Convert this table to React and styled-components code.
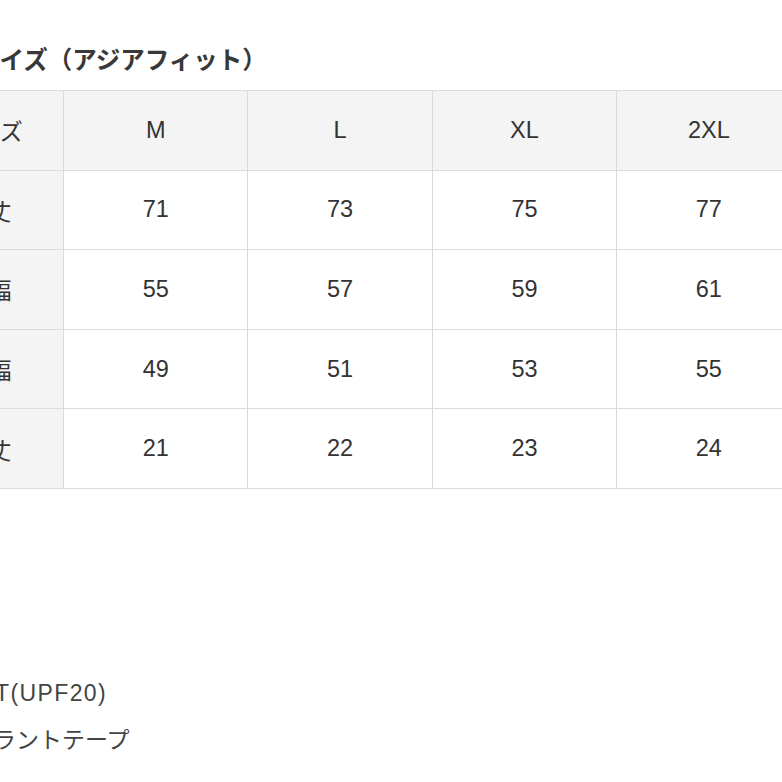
import React from "react";
import styled, { createGlobalStyle } from "styled-components";

const Global = createGlobalStyle`
  html, body { margin: 0; padding: 0; background: #ffffff; }
  body { overflow: hidden; }
`;

const Page = styled.div`
  width: 782px;
  height: 782px;
  overflow: hidden;
  background: #ffffff;
  font-family: "Liberation Sans", "Noto Sans CJK JP", sans-serif;
  color: #333333;
`;

const Content = styled.div`
  margin-left: -86px;
  padding-top: 44px;
  display: flex;
  flex-direction: column;
`;

const Title = styled.h2`
  margin: 0 0 16px 0;
  padding-left: 61px;
  font-family: "Noto Sans CJK JP", sans-serif;
  font-size: 24.5px;
  font-weight: 700;
  line-height: 30px;
  color: #383838;
  white-space: nowrap;
`;

const Grid = styled.div`
  display: grid;
  grid-template-columns: 150px repeat(4, 184.4px);
  grid-auto-rows: 79.6px;
  border-top: 1px solid #dcdcdc;
  width: max-content;
`;

const Cell = styled.div`
  display: flex;
  align-items: center;
  justify-content: center;
  box-sizing: border-box;
  border-right: 1px solid #d9d9d9;
  border-bottom: 1px solid #dcdcdc;
  background: ${(p) => (p.$shade ? "#f4f4f4" : "#ffffff")};
  font-family: ${(p) =>
    p.$jp ? '"Noto Sans CJK JP", sans-serif' : '"Liberation Sans", "Noto Sans CJK JP", sans-serif'};
  font-size: ${(p) => (p.$jp ? "23px" : "23.5px")};
  color: #333333;
`;

const Notes = styled.div`
  margin-top: 181px;
  display: flex;
  flex-direction: column;
`;

const Note = styled.div`
  font-family: "Liberation Sans", "Noto Sans CJK JP", sans-serif;
  font-size: 23px;
  line-height: 47px;
  color: #444444;
  white-space: nowrap;
  margin-left: ${(p) => p.$shift}px;
  letter-spacing: ${(p) => p.$spacing || 0}px;
`;

const sizes = ["M", "L", "XL", "2XL"];
const rows = [
  { label: "着丈", values: [71, 73, 75, 77] },
  { label: "身幅", values: [55, 57, 59, 61] },
  { label: "肩幅", values: [49, 51, 53, 55] },
  { label: "袖丈", values: [21, 22, 23, 24] },
];

export default function App() {
  return (
    <Page>
      <Global />
      <Content>
        <Title>サイズ（アジアフィット）</Title>
        <Grid>
          <Cell $shade $jp>サイズ</Cell>
          {sizes.map((s) => (
            <Cell key={s} $shade>{s}</Cell>
          ))}
          {rows.map((r) => (
            <React.Fragment key={r.label}>
              <Cell $shade $jp>{r.label}</Cell>
              {r.values.map((v, i) => (
                <Cell key={i}>{v}</Cell>
              ))}
            </React.Fragment>
          ))}
        </Grid>
        <Notes>
          <Note $shift={-22} $spacing={1.4}>・UV CUT(UPF20)</Note>
          <Note $shift={-36}>・リフレクラントテープ</Note>
        </Notes>
      </Content>
    </Page>
  );
}
